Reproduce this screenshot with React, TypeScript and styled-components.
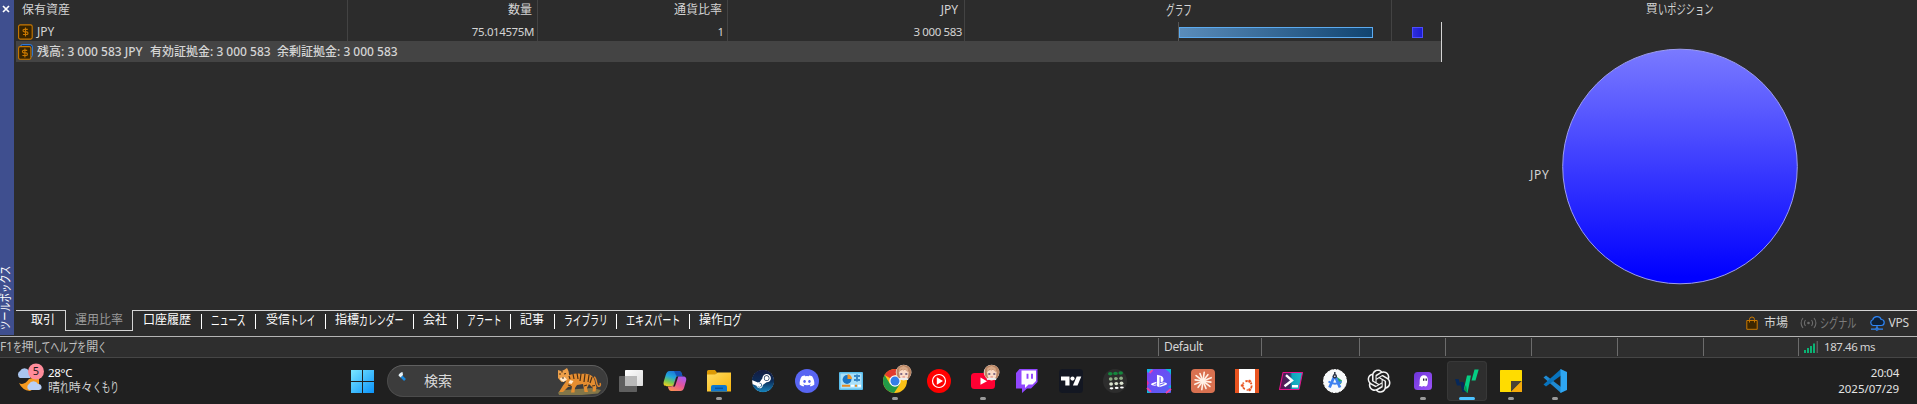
import React from "react";
import styled, { createGlobalStyle } from "styled-components";
import { FaDiscord, FaPlaystation, FaSteam } from "react-icons/fa";
import { RiOpenaiFill } from "react-icons/ri";

const Global = createGlobalStyle`
  * { box-sizing: border-box; }
  body {
    margin: 0;
    background: #2c2c2c;
    color: #d4d4d4;
    font: 12px/18px "Noto Sans", "Noto Sans CJK JP", sans-serif;
    overflow: hidden;
  }
`;

/* ---------- text ---------- */

const Line = styled.span<{ $ls?: number; $size?: number; $color?: string; $weight?: number }>`
  display: inline-flex;
  white-space: pre;
  letter-spacing: ${(p) => p.$ls ?? 0}px;
  font-size: ${(p) => p.$size ?? 12}px;
  color: ${(p) => p.$color ?? "inherit"};
  font-weight: ${(p) => p.$weight ?? 400};
`;

const Kana = styled.span<{ $n: number; $k: number }>`
  display: inline-block;
  width: ${(p) => p.$n * p.$k}em;
  white-space: nowrap;
  letter-spacing: 0;
  > span {
    display: inline-block;
    font-size: 1.09em;
    transform: scaleX(${(p) => p.$k / 1.09});
    transform-origin: 0 50%;
  }
`;

type LabelProps = { text: string; k?: number; ls?: number; size?: number; color?: string; weight?: number };

/* Sets kana runs narrower than kanji, as compact UI fonts do. */
function Label({ text, k = 0.73, ls, size, color, weight }: LabelProps) {
  const runs = text.match(/[\u3040-\u30ff]+|[^\u3040-\u30ff]+/g) ?? [];
  return (
    <Line $ls={ls} $size={size} $color={color} $weight={weight}>
      {runs.map((r, i) =>
        /[\u3040-\u30ff]/.test(r) ? (
          <Kana key={i} $n={r.length} $k={k}>
            <span>{r}</span>
          </Kana>
        ) : (
          <span key={i}>{r}</span>
        )
      )}
    </Line>
  );
}

/* ---------- page frame ---------- */

const Page = styled.div`
  width: 1917px;
  height: 404px;
  display: flex;
  flex-direction: column;
  overflow: hidden;
`;

const Toolbox = styled.div`
  display: flex;
  height: 335px;
`;

const SideBar = styled.div`
  width: 14px;
  background: #3f4f8f;
  color: #fff;
  display: flex;
  flex-direction: column;
  justify-content: space-between;
  padding: 5px 0 5px;
`;

const CloseIcon = styled.svg`
  display: block;
  width: 8px;
  height: 8px;
  margin-left: 2px;
`;

const SideTitle = styled.div`
  writing-mode: vertical-rl;
  text-orientation: sideways;
  transform: translateY(9.7px) rotate(180deg) scaleY(0.77);
  width: 12px;
  height: 84px;
  line-height: 12px;
  white-space: nowrap;
`;

const Content = styled.div`
  flex: 1;
  display: flex;
  flex-direction: column;
  padding-left: 2px;
`;

const Panels = styled.div`
  display: flex;
  height: 310px;
`;

/* ---------- exposure table ---------- */

const Table = styled.div`
  width: 1426px;
`;

const Row = styled.div<{ $head?: boolean }>`
  display: grid;
  grid-template-columns: 332px 190px 190px 237px 427px 50px;
  height: ${(p) => (p.$head ? 22 : 19)}px;
`;

const Cell = styled.div<{ $align?: string; $pad?: string; $last?: boolean }>`
  display: flex;
  align-items: center;
  height: 100%;
  min-height: 0;
  justify-content: ${(p) => p.$align ?? "flex-end"};
  padding: ${(p) => p.$pad ?? "0 4px 0 0"};
  border-right: ${(p) => (p.$last ? "none" : "1px solid #434343")};
`;

const EndCell = styled(Cell)`
  border-right: 1px solid #d4d4d4;
`;

const BarCell = styled.div`
  display: flex;
  border-right: 1px solid #434343;
  padding-left: 213px;
`;

const BarAxis = styled.div`
  border-left: 1px solid #555;
  padding-top: 5px;
`;

const Bar = styled.div`
  width: 194px;
  height: 11px;
  border: 1px solid #5cabf0;
  background: linear-gradient(90deg, #5a8cba, #114470);
`;

const Swatch = styled.div`
  width: 11px;
  height: 11px;
  border: 1px solid #4c4cff;
  background: linear-gradient(90deg, #2e2edc, #1c1cd0);
`;

const Summary = styled.div`
  height: 21px;
  background: #444;
  border-right: 1px solid #d4d4d4;
  display: flex;
  align-items: center;
  padding-left: 2px;
`;

const SummaryPart = styled.div<{ $w: number }>`
  width: ${(p) => p.$w}px;
`;

const CoinIcon = styled.svg`
  width: 15px;
  height: 16px;
  display: block;
  flex: none;
  margin-right: 4px;
`;

function Coin({ stacked = false }: { stacked?: boolean }) {
  return (
    <CoinIcon viewBox="0 0 15 16">
      {stacked && <rect x="2.5" y="0.7" width="11.8" height="12.5" rx="2" fill="#12263f" stroke="#2f86f6" />}
      <rect x="0.6" y={stacked ? 2.6 : 0.9} width={stacked ? 12.3 : 13.6} height={stacked ? 12.7 : 14.2} rx="1.6" fill="#382400" stroke="#c97800" strokeWidth="1.1" />
      <g transform={stacked ? "translate(-0.6 1)" : undefined} fill="none" stroke="#c97800" strokeWidth="1.1">
        <path d="M9.8 5.4H6.3Q5 5.4 5 6.6T6.3 7.900H8.6Q10 7.900 10 9.200T8.6 10.500H5M7.500 3.500v9" />
      </g>
    </CoinIcon>
  );
}

/* ---------- long positions chart ---------- */

const Chart = styled.div`
  flex: 1;
  display: flex;
  flex-direction: column;
  padding-left: 88px;
`;

const ChartTitle = styled.div`
  width: 299px;
  height: 48px;
  display: flex;
  justify-content: center;
`;

const PieRow = styled.div`
  display: flex;
  align-items: center;
`;

const PieLabel = styled.div`
  width: 32px;
  padding-top: 16px;
`;

const Pie = styled.svg`
  width: 237px;
  height: 237px;
  display: block;
`;

/* ---------- tabs ---------- */

const TabStrip = styled.div`
  display: flex;
  height: 25px;
`;

const Tab = styled.div<{ $w: number; $pad: number; $divider?: boolean }>`
  width: ${(p) => p.$w}px;
  padding: 0 0 0 ${(p) => p.$pad}px;
  border-top: 1px solid #d4d4d4;
  color: #fff;
  height: 21px;
  display: flex;
  &::after {
    content: "";
    width: ${(p) => (p.$divider ? 1 : 0)}px;
    height: 15px;
    margin: 3px 0 0 auto;
    background: #fff;
  }
`;

const ActiveTab = styled.div`
  width: 68px;
  height: 21px;
  padding: 1px 0 0 9px;
  border: 1px solid #d4d4d4;
  border-top: none;
  color: #9a9a9a;
`;

const TabFill = styled.div`
  flex: 1;
  border-top: 1px solid #d4d4d4;
  display: flex;
  justify-content: flex-end;
  padding: 3px 8px 0 0;
`;

const Service = styled.div<{ $ml?: number; $gap: number }>`
  display: flex;
  align-items: center;
  gap: ${(p) => p.$gap}px;
  margin-left: ${(p) => p.$ml ?? 0}px;
  height: 18px;
`;

/* ---------- status bar ---------- */

const StatusBar = styled.div`
  height: 22px;
  background: #2e2e2e;
  border-top: 1px solid #b4b4b4;
  border-bottom: 1px solid #464646;
  margin-top: 1px;
  display: flex;
  padding: 1px 0 1px;
`;

const StatusCell = styled.div<{ $w?: number; $pad?: number }>`
  width: ${(p) => (p.$w ? `${p.$w}px` : "auto")};
  flex: ${(p) => (p.$w ? "none" : 1)};
  padding-left: ${(p) => p.$pad ?? 0}px;
  border-left: ${(p) => (p.$pad === undefined ? "none" : "1px solid #6c6c6c")};
  display: flex;
  align-items: center;
`;

const Signal = styled.svg`
  width: 15px;
  height: 12px;
  margin-right: 5px;
`;

/* ---------- taskbar ---------- */

const TaskBar = styled.div`
  height: 46px;
  background: #202020;
  display: flex;
  align-items: flex-start;
`;

const Weather = styled.div`
  width: 350px;
  padding: 5px 0 0 16px;
  display: flex;
  gap: 3px;
`;

const WeatherText = styled.div`
  display: flex;
  flex-direction: column;
  line-height: 15px;
  padding-top: 2px;
  color: #fff;
`;

const WeatherIcon = styled.svg`
  width: 29px;
  height: 29px;
`;

const StartIcon = styled.svg`
  width: 25px;
  height: 25px;
  margin: 10px 12px 0 0;
`;

const Search = styled.div`
  width: 221px;
  height: 32px;
  margin: 7px 1px 0 0;
  border-radius: 16px;
  background: #3c3c3c;
  border: 1px solid #4c4c4c;
  border-top-color: #606060;
  display: flex;
  align-items: center;
  justify-content: space-between;
  padding: 0 5px 0 10px;
`;

const SearchLeft = styled.div`
  display: flex;
  align-items: center;
  gap: 18px;
`;

const Slot = styled.div<{ $active?: boolean }>`
  width: 40px;
  height: 40px;
  margin: 3px 2px 0;
  border-radius: 4px;
  background: ${(p) => (p.$active ? "#2e2e2e" : "transparent")};
  box-shadow: ${(p) => (p.$active ? "inset 0 0 0 1px #383838" : "none")};
  display: flex;
  flex-direction: column;
  align-items: center;
  padding-top: 7px;
`;

const AppIcon = styled.svg`
  width: 26px;
  height: 26px;
  overflow: visible;
  flex: none;
`;

const Mark = styled.div<{ $active?: boolean }>`
  width: ${(p) => (p.$active ? 16 : 6)}px;
  height: 3px;
  margin-top: 3px;
  border-radius: 2px;
  background: ${(p) => (p.$active ? "#4cc2ff" : "#9a9a9a")};
`;

const Clock = styled.div`
  margin-left: auto;
  padding: 7px 18px 0 0;
  display: flex;
  flex-direction: column;
  align-items: flex-end;
  line-height: 16px;
  color: #e4e4e4;
`;

const Avatar = () => (
  <g>
    <circle cx="21.6" cy="3.6" r="7.8" fill="#f6ebe2" />
    <path d="M14.6 4C14-2 18-4 22-4s8 3 7.2 8c-.4 3-2 5-3 5.4L17 9C15.500 8 14.600 6 14.600 4Z" fill="#b98564" />
    <path d="M17 3c2-3 8-3 9.600 0l-.6 5c-2 3-6 3-8.200 0Z" fill="#fbdcc8" />
    <path d="M16.500 4l3-4 2 2 1-2 4 4-1-5-4-2-4 2Z" fill="#d7a887" />
    <path d="M18.300 5h2M23.300 5h2" stroke="#5d4a72" strokeWidth="1.300" />
    <path d="M20.500 8h2.400" stroke="#d5524c" strokeWidth=".8" />
    <path d="M17 10.500q4.600-2 9.200 0" stroke="#e9f0f4" strokeWidth="1.500" fill="none" />
  </g>
);

const apps: { mark?: boolean; active?: boolean; art: React.ReactNode }[] = [
  {
    art: (
      <>
        <defs>
          <linearGradient id="tv1" x1="0" y1="0" x2="1" y2="1"><stop stopColor="#fff" /><stop offset="1" stopColor="#dcdcdc" /></linearGradient>
        </defs>
        <rect x="7" y="1" width="18" height="16" rx=".7" fill="url(#tv1)" />
        <rect x="1" y="7" width="18" height="16" rx=".7" fill="#5f5f5f" />
        <rect x="7" y="7" width="12" height="10" fill="#b9b9b9" />
      </>
    ),
  },
  {
    art: (
      <>
        <defs>
          <linearGradient id="cp1" x1=".6" y1="0" x2=".2" y2="1"><stop stopColor="#1b72d8" /><stop offset=".4" stopColor="#22a7dc" /><stop offset=".7" stopColor="#72c657" /><stop offset="1" stopColor="#f5d01d" /></linearGradient>
          <linearGradient id="cp2" x1=".8" y1="0" x2=".2" y2="1"><stop stopColor="#a95bf0" /><stop offset=".5" stopColor="#e4559a" /><stop offset="1" stopColor="#fd9150" /></linearGradient>
        </defs>
        <path d="M7.500 2h9.200c1.800 0 2.600 1.200 3 2.600l.8 2.600h-3.700c-1.600 0-2.600.8-3 2.400l-1.500 5c-.6 2-1.400 2.600-3 2.600H5c-3 0-4-1.700-3.200-4.700l1.600-5.600C4.300 3.600 5.500 2 7.500 2Z" fill="url(#cp1)" />
        <path d="M12 2h4.700c1.800 0 2.600 1.200 3 2.600l.8 2.600h-4.200c-2 0-2.600-1.200-3-2.800Z" fill="#1650b5" />
        <path d="M18.500 22H9.300c-1.800 0-2.400-1.400-3-2.800l-.5-1.800h2.800c1.800 0 2.900-.9 3.400-2.600l1.400-4.800c.6-2 1.400-2.600 3-2.600H21c3 0 3.800 1.700 3 4.700l-2 7c-.7 1.900-1.700 2.900-3.500 2.900Z" fill="url(#cp2)" />
        <path d="M14.600 7.600h1.700l-3.400 10h-2.300q1-.6 1.400-2.400l1.600-5.200q.4-1.700 1-2.400Z" fill="#202020" />
      </>
    ),
  },
  {
    mark: true,
    art: (
      <>
        <defs><linearGradient id="fo" x1="0" y1="0" x2="1" y2="1"><stop stopColor="#ffdc62" /><stop offset="1" stopColor="#f9b50c" /></linearGradient></defs>
        <path d="M1 2.500Q1 1 2.500 1H9l2 2.500-2 3H1Z" fill="#dc9a05" />
        <path d="M1 5.500H9L11.500 3.500H25V22.500H1Z" fill="url(#fo)" />
        <path d="M5 22.500V18q0-2 2-2H19q2 0 2 2v4.500Z" fill="#0f78cf" />
        <path d="M9 19.300h8" stroke="#0a54a0" strokeWidth="1.500" />
      </>
    ),
  },
  {
    art: (
      <>
        <defs><linearGradient id="st" x1="0" y1="0" x2="0" y2="1"><stop stopColor="#141b40" /><stop offset=".5" stopColor="#0c2c58" /><stop offset="1" stopColor="#1584bd" /></linearGradient></defs>
        <circle cx="13" cy="12" r="10.800" fill="#fff" />
        <FaSteam x="1.500" y=".5" size={23} fill="url(#st)" />
      </>
    ),
  },
  {
    art: (
      <>
        <circle cx="13" cy="12" r="12" fill="#5865f2" />
        <FaDiscord x="5" y="4" size={16} color="#fff" />
      </>
    ),
  },
  {
    art: (
      <>
        <rect x="1" y="3" width="24" height="18" rx="1" fill="#59bdec" />
        <rect x="2.500" y="4.500" width="21" height="15" fill="#a9e0fa" />
        <circle cx="9" cy="10.500" r="4.400" fill="#1a74c4" />
        <path d="M9.500 10V5.300A4.500 4.500 0 0 1 14 10Z" fill="#f19327" />
        <path d="M16 7h2M20 7h2M16 11h2M20 11h2M19 5.500v7" stroke="#1569b3" strokeWidth="1.500" />
        <path d="M4 16.800h8M17 16.800h2" stroke="#e78a22" strokeWidth="2" />
        <path d="M13 16.800h3M20 16.800h3" stroke="#fff" strokeWidth="2" />
      </>
    ),
  },
  {
    mark: true,
    art: (
      <>
        <circle cx="13" cy="12" r="12" fill="#fbc116" />
        <path d="M13 12 2.600 6A12 12 0 0 1 23.400 6H13Z" fill="#e33b2e" />
        <path d="M2.600 6A12 12 0 0 0 12 24l6-9H8Z" fill="#229a48" />
        <circle cx="13" cy="12" r="5.700" fill="#fff" />
        <circle cx="13" cy="12" r="4.500" fill="#347ee8" />
        <Avatar />
      </>
    ),
  },
  {
    art: (
      <>
        <circle cx="13" cy="12" r="12" fill="#f00" />
        <circle cx="13" cy="12" r="6.500" fill="none" stroke="#fff" strokeWidth="1.200" />
        <path d="M10.800 8.200 17 12l-6.200 3.800Z" fill="#fff" />
      </>
    ),
  },
  {
    mark: true,
    art: (
      <>
        <rect x="1" y="4" width="24" height="16" rx="3.500" fill="#ff0033" />
        <path d="M10.500 8.600 17 12.200l-6.500 3.600Z" fill="#fff" />
        <Avatar />
      </>
    ),
  },
  {
    art: (
      <>
        <path d="M5.500 0H23.500V13L17 19.500H13L8 24V19.500H2V4Z" fill="#9146ff" />
        <path d="M7.500 1.500H22V12L18.500 15.500H14.500L11 19V15.500H7.500Z" fill="#fff" />
        <path d="M13.500 4.800v5M18 4.800v5" stroke="#9146ff" strokeWidth="1.900" />
      </>
    ),
  },
  {
    art: (
      <>
        <rect x="1" y="0" width="24" height="24" rx="3.500" fill="#131722" />
        <path d="M3 7.500h8.500v9H7.300V11.500H3Z" fill="#fff" />
        <circle cx="14.500" cy="9.600" r="2.100" fill="#fff" />
        <path d="M18.700 7.500h4.600L19.500 16.500h-4.600Z" fill="#fff" />
      </>
    ),
  },
  {
    art: (
      <>
        <circle cx="13" cy="12" r="12" fill="#2d2d2d" />
        {[4.8, 10, 15, 19.3].map((y, r) =>
          [0, 1, 2].map((c) => (
            <ellipse key={`${r}${c}`} cx={8.3 + c * 5.2 + r * 0.4} cy={y - c * 0.4} rx={r === 0 ? 2.3 : 1.9} ry={r === 3 ? 1.1 : 1.7} fill={["#14883d", "#8fae86", "#dbe3d0", "#fff"][r]} />
          ))
        )}
      </>
    ),
  },
  {
    art: (
      <>
        <defs><linearGradient id="ps" x1="0" y1="0" x2="1" y2="1"><stop stopColor="#7b3ff2" /><stop offset="1" stopColor="#5364f5" /></linearGradient></defs>
        <rect x="1" y="0" width="24" height="24" rx="1" fill="url(#ps)" />
        <path d="M1 0h6L3 4 1 3Z" fill="#12b4e8" />
        <path d="M3.500 4l3-3M1 19l4 4M20 24l5-4" stroke="#f043a8" strokeWidth="1.800" />
        <path d="M19 0h6v6q-2-4-6-6ZM1 21l4 3H1ZM22 18l3 1v-3Z" fill="#0fb8dd" />
        <path d="M1 11l2 3-2 3Z" fill="#ec2c94" />
        <FaPlaystation x="5" y="4" size={16} color="#fff" />
      </>
    ),
  },
  {
    art: (
      <>
        <rect x="1" y="0" width="24" height="24" rx="4" fill="#d97150" />
        <g stroke="#fff1e6" strokeWidth="1.600" strokeLinecap="round">
          {Array.from({ length: 12 }, (_, i) => {
            const a = ((i * 30 + 8) * Math.PI) / 180;
            const l = i % 2 ? 8.8 : 8;
            return <path key={i} d={`M13 12L${(13 + l * Math.cos(a)).toFixed(1)} ${(12 + l * Math.sin(a)).toFixed(1)}`} />;
          })}
        </g>
      </>
    ),
  },
  {
    art: (
      <>
        <rect x="1" y="0" width="24" height="24" fill="#e95420" />
        <rect x="5" y="0" width="16" height="24" fill="#fff" />
        <circle cx="13.200" cy="16.500" r="4.500" fill="none" stroke="#e95420" strokeWidth="1.800" strokeDasharray="7.400 2" />
        <g fill="#e95420" stroke="#fff" strokeWidth=".6">
          <circle cx="8.300" cy="16.500" r="1.800" />
          <circle cx="15.600" cy="12.200" r="1.800" />
          <circle cx="15.600" cy="20.800" r="1.800" />
        </g>
      </>
    ),
  },
  {
    art: (
      <>
        <defs><linearGradient id="pw" x1="0" y1="0" x2="1" y2="0"><stop stopColor="#641050" /><stop offset=".45" stopColor="#3a2c62" /><stop offset=".55" stopColor="#0ea5bd" /><stop offset="1" stopColor="#20b8c8" /></linearGradient></defs>
        <path d="M5 3.500H24.500L21 20.500H1.500Z" fill="url(#pw)" stroke="#e6128c" strokeWidth="1.100" strokeLinejoin="round" />
        <path d="M8 6.200l6 5.300-7.500 5.800M14 17.200h6" fill="none" stroke="#fff" strokeWidth="2.400" />
      </>
    ),
  },
  {
    art: (
      <>
        <circle cx="13" cy="12" r="11.500" fill="#f7f9fa" stroke="#fff" strokeWidth="1" strokeDasharray="2.500 1" />
        <path d="M15 8l5 3.500-1 3.500-4-1Z" fill="#25a564" />
        <path d="M12.500 7 7.500 18.500M13 7l5 11.500" stroke="#3f82f0" strokeWidth="2.800" />
        <path d="M6.500 12.500q6.500 4.500 13 0" fill="none" stroke="#3f82f0" strokeWidth="1.800" />
        <circle cx="12.800" cy="7.300" r="2.200" fill="#2b3446" />
        <circle cx="12.800" cy="7.300" r=".8" fill="#fff" />
        <path d="M12.800 3v3" stroke="#2b3446" strokeWidth="1.500" />
      </>
    ),
  },
  { art: <RiOpenaiFill x="-.9" y="-1.900" size={28} color="#f4f4f4" /> },
  {
    mark: true,
    art: (
      <>
        <defs><linearGradient id="gh" x1="0" y1="0" x2="1" y2="1"><stop stopColor="#6d35d8" /><stop offset="1" stopColor="#9d54fa" /></linearGradient></defs>
        <rect x="4" y="3" width="18" height="18" rx="3.500" fill="url(#gh)" />
        <path d="M9 17c1-2 .5-3 .7-6 .2-3 1.800-4.700 4.200-4.700s4 1.700 4 5-.2 6.200-2.400 6.200c-1 0-1.300-.6-2-.5-1 .2-1.400.9-2.300.6-.5-.2-.6-.5-1-.5-.600 0-1 .4-1.200-.1Z" fill="#fff" />
        <path d="M13.700 9.500v2.300M16.200 9.500v2.300" stroke="#1c1230" strokeWidth="1.300" />
      </>
    ),
  },
  {
    mark: true,
    active: true,
    art: (
      <>
        <path d="M1 10h3.500l2 6.500H3ZM6 13h3.600l2.600 10H8.500Z" fill="#06285a" />
        <path d="M13 6.500h4L13.500 24 9.800 20.500ZM20.500.5h4.200L21.500 11.500H17.500Z" fill="#04cf83" />
        <path d="M9.800 20.500 12 16l1.500 8Z" fill="#06954f" />
      </>
    ),
  },
  {
    mark: true,
    art: (
      <>
        <rect x="2" y="1" width="22" height="22" rx=".5" fill="#ffdc00" />
        <path d="M13 23V12H24L13 23Z" fill="#4a4335" />
        <path d="M24 12v10.500q0 .5-.5.500H13Z" fill="#f5aa0a" />
      </>
    ),
  },
  {
    mark: true,
    art: (
      <>
        <path d="M1.500 8.500 4 6.500 21 19.500 19 24Z" fill="#1f8ad2" />
        <path d="M1.500 15.500 4 17.500 21 5 19 0Z" fill="#0873bd" />
        <path d="M18.500 0 25 3V21l-6.500 3Z" fill="#2ea6f2" />
      </>
    ),
  },
];

const Tiger = () => (
  <svg width="46" height="27" viewBox="0 0 46 27">
    <path d="M2 24.500 8 22l28-2 9 2-3 3.500-16 1.500H3Z" fill="#827649" />
    <path d="M38 9c3 1 2 8 4 9s3-1 2-3" fill="none" stroke="#dd842c" strokeWidth="1.500" />
    <path d="M11 8c5-2 8-3 14-2 7-1 12 1 13.500 6 .8 3 .5 4 2 7l-1 4.500h-3l.5-3.500-4-4-2 4 1 4h-3.500l-1.500-8-6 1-2 3-.5 4.500h-3.500l1-6.500-4 1-5 5H3l4-6.500 3-4Z" fill="#e58d30" />
    <path d="M2 2l3 1 3-1 3-2 1.500 3 1 6-3 4-5 1-3.500-4Z" fill="#eda04a" />
    <path d="M4 10l4.500-1 2.500 2.500-3.500 2.500-3-2ZM14 12l3.500 1-2 3-3-1Z" fill="#ffe9cc" />
    <path d="M3 6h2M8 6l2-.5M6 10h2M6 2.500v2M17 6l1 5M21 5l1 6M25 6l-1 7M29 6l-1 8M33 7l-1 7M36 9l-2 6M12 17l3 1M28 18l3-1M36 18l3-.5M13 8l1 3" stroke="#493018" strokeWidth="1.200" />
  </svg>
);

/* ---------- data ---------- */

const tabs: { text: string; w: number; pad: number; k?: number; divider?: boolean }[] = [
  { text: "口座履歴", w: 69, pad: 10, divider: true },
  { text: "ニュース", w: 54, pad: 9, k: 0.73, divider: true },
  { text: "受信トレイ", w: 70, pad: 10, k: 0.7, divider: true },
  { text: "指標カレンダー", w: 88, pad: 9, k: 0.74, divider: true },
  { text: "会社", w: 44, pad: 9, divider: true },
  { text: "アラート", w: 53, pad: 9, k: 0.72, divider: true },
  { text: "記事", w: 44, pad: 9, divider: true },
  { text: "ライブラリ", w: 62, pad: 9, k: 0.73, divider: true },
  { text: "エキスパート", w: 73, pad: 9, k: 0.76, divider: true },
  { text: "操作ログ", w: 60, pad: 9, k: 0.77 },
];

export default function App() {
  return (
    <Page>
      <Global />
      <Toolbox>
        <SideBar>
          <CloseIcon viewBox="0 0 8 8">
            <path d="M1 1l6 6M7 1L1 7" stroke="#fff" strokeWidth="1.700" />
          </CloseIcon>
          <SideTitle>ツールボックス</SideTitle>
        </SideBar>
        <Content>
          <Panels>
            <Table>
              <Row $head>
                <Cell $align="flex-start" $pad="0 0 2px 6px"><Label text="保有資産" /></Cell>
                <Cell $pad="0 5px 2px 0"><Label text="数量" /></Cell>
                <Cell $pad="0 5px 2px 0"><Label text="通貨比率" /></Cell>
                <Cell $pad="0 6px 2px 0"><Label text="JPY" /></Cell>
                <Cell $align="center" $pad="0 0 2px 2px"><Label text="グラフ" k={0.72} /></Cell>
                <Cell $last />
              </Row>
              <Row>
                <Cell $align="flex-start" $pad="0 0 0 2px"><Coin /><Label text="JPY" /></Cell>
                <Cell $pad="0 3px 0 0"><Label text="75.014575M" size={11.5} ls={-0.4} /></Cell>
                <Cell $pad="0 3px 0 0"><Label text="1" size={11.5} /></Cell>
                <Cell $pad="0 2px 0 0"><Label text="3 000 583" size={11.5} ls={-0.4} /></Cell>
                <BarCell><BarAxis><Bar /></BarAxis></BarCell>
                <EndCell $align="flex-start" $pad="2px 0 0 20px"><Swatch /></EndCell>
              </Row>
              <Summary>
                <Coin stacked />
                <SummaryPart $w={113}><Label text="残高: 3 000 583 JPY" weight={500} /></SummaryPart>
                <SummaryPart $w={127}><Label text="有効証拠金: 3 000 583" weight={500} /></SummaryPart>
                <SummaryPart $w={127}><Label text="余剰証拠金: 3 000 583" weight={500} /></SummaryPart>
              </Summary>
            </Table>
            <Chart>
              <ChartTitle><Label text="買いポジション" k={0.77} /></ChartTitle>
              <PieRow>
                <PieLabel><Label text="JPY" ls={0.7} /></PieLabel>
                <Pie viewBox="0 0 237 237">
                  <defs>
                    <linearGradient id="pie" x1="0" y1="0" x2="0" y2="1">
                      <stop stopColor="#7a7aff" />
                      <stop offset="0.970" stopColor="#0000ff" />
                    </linearGradient>
                  </defs>
                  <circle cx="118" cy="118.500" r="117.300" fill="url(#pie)" stroke="#9c9cf0" strokeWidth="1" />
                </Pie>
              </PieRow>
            </Chart>
          </Panels>
          <TabStrip>
            <Tab $w={49} $pad={15}><Label text="取引" /></Tab>
            <ActiveTab><Label text="運用比率" /></ActiveTab>
            {tabs.map((t) => (
              <Tab key={t.text} $w={t.w} $pad={t.pad} $divider={t.divider}><Label text={t.text} k={t.k} /></Tab>
            ))}
            <TabFill>
              <Service $gap={6}>
                <svg width="12" height="14" viewBox="0 0 12 14">
                  <path d="M.8 4.500H11.200V13.300H.8Z" fill="#3d2700" stroke="#c97800" />
                  <path d="M3.500 6.500V3.500a2.500 2.500 0 0 1 5 0v3" fill="none" stroke="#c97800" />
                </svg>
                <Label text="市場" />
              </Service>
              <Service $gap={3} $ml={12}>
                <svg width="17" height="12" viewBox="0 0 17 12" fill="none" stroke="#6c6c6c" strokeWidth="1.100">
                  <path d="M3 1Q-.8 6 3 11M5.500 3Q3.300 6 5.500 9M11.500 3q2.200 3 0 6M14 1q3.800 5 0 10" />
                  <circle cx="8.500" cy="6" r="1.300" fill="#6c6c6c" stroke="none" />
                </svg>
                <Label text="シグナル" k={0.76} color="#7c7c7c" />
              </Service>
              <Service $gap={4} $ml={12}>
                <svg width="16" height="15" viewBox="0 0 16 15" fill="none" stroke="#2f86f6" strokeWidth="1.200">
                  <path d="M4 9.500a3 3 0 0 1-.3-5.700 4.500 4.500 0 0 1 8.500-.3 3 3 0 0 1 0 6Z" fill="#0d2038" />
                  <path d="M8 9.500v3M2 13.200h4.500M9.500 13.200H14" />
                  <circle cx="8" cy="13" r="1.200" />
                </svg>
                <Label text="VPS" ls={-0.2} />
              </Service>
            </TabFill>
          </TabStrip>
        </Content>
      </Toolbox>

      <StatusBar>
        <StatusCell $w={1158}><Label text="F1を押してヘルプを開く" k={0.74} ls={-0.3} color="#c0c0c0" /></StatusCell>
        <StatusCell $w={103} $pad={5}><Label text="Default" ls={-0.35} /></StatusCell>
        <StatusCell $w={98} $pad={0} />
        <StatusCell $w={86} $pad={0} />
        <StatusCell $w={86} $pad={0} />
        <StatusCell $w={86} $pad={0} />
        <StatusCell $w={86} $pad={0} />
        <StatusCell $w={95} $pad={0} />
        <StatusCell $pad={5}>
          <Signal viewBox="0 0 15 12">
            <path d="M1 9v3M4 7v5M7 5v7M10 2.500v9.500" stroke="#08c27c" strokeWidth="1.800" />
            <path d="M13.300 0v12" stroke="#5c5c5c" strokeWidth="1.500" />
          </Signal>
          <Label text="187.46 ms" size={11.5} ls={-0.45} />
        </StatusCell>
      </StatusBar>

      <TaskBar>
        <Weather>
          <WeatherIcon viewBox="0 0 29 29">
            <path d="M3 20q5 3 10-4l10-3v10l-9 5Q6 27 3 20Z" fill="#f59a1f" />
            <path d="M4 15a4 4 0 0 1 0-7 5 5 0 0 1 9 0l3 3-2 4Z" fill="#a9c4ee" />
            <path d="M13 27a3.500 3.500 0 0 1 0-6 5 5 0 0 1 9 0 3 3 0 1 1 1 6Z" fill="#b9d0f5" />
            <circle cx="20" cy="8.500" r="8" fill="#ff8c9b" />
            <text x="20" y="12.300" textAnchor="middle" fontSize="11" fill="#1b1b1b">5</text>
          </WeatherIcon>
          <WeatherText>
            <Label text="28°C" size={11.5} ls={-0.3} />
            <Label text="晴れ時々くもり" k={0.72} color="#d0d0d0" />
          </WeatherText>
        </Weather>
        <StartIcon viewBox="0 0 25 25">
          <defs>
            <linearGradient id="win" x1="0" y1="0" x2="1" y2="1"><stop stopColor="#7be8ff" /><stop offset="1" stopColor="#0a93fb" /></linearGradient>
          </defs>
          <path d="M1 2h11v11H1ZM13 2h11v11H13ZM1 14h11v11H1ZM13 14h11v11H13Z" fill="url(#win)" />
        </StartIcon>
        <Search>
          <SearchLeft>
            <svg width="8" height="22" viewBox="0 0 8 22">
              <path d="M3.500 6.500 7 10" stroke="#1687dd" strokeWidth="2.600" />
              <path d="M.5 5.500Q1 3 4.500 2L5 5 2.500 7.500Z" fill="#e6f4fb" />
            </svg>
            <Label text="検索" size={14} color="#dadada" />
          </SearchLeft>
          <Tiger />
        </Search>
        {apps.map((a, i) => (
          <Slot key={i} $active={a.active}>
            <AppIcon viewBox="0 -1 26 26">{a.art}</AppIcon>
            {a.mark && <Mark $active={a.active} />}
          </Slot>
        ))}
        <Clock>
          <Label text="20:04" size={11.5} ls={-0.25} />
          <Label text="2025/07/29" size={11.5} ls={-0.05} />
        </Clock>
      </TaskBar>
    </Page>
  );
}
